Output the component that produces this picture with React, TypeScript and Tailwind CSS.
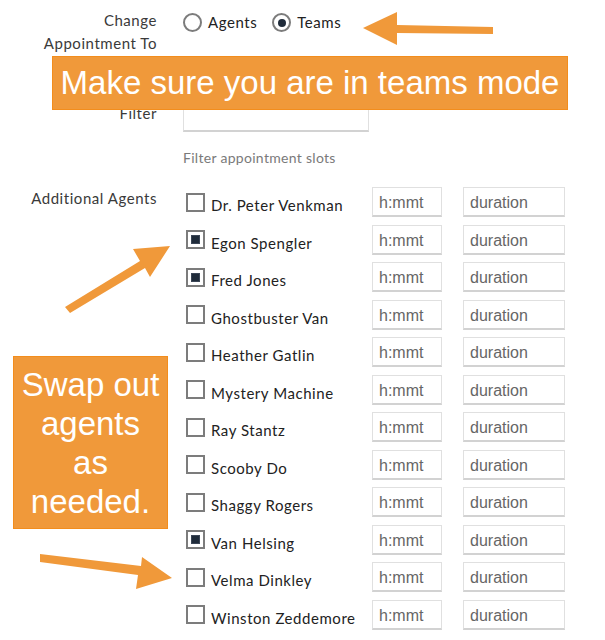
const agents = [
  { name: 'Dr. Peter Venkman', checked: false },
  { name: 'Egon Spengler', checked: true },
  { name: 'Fred Jones', checked: true },
  { name: 'Ghostbuster Van', checked: false },
  { name: 'Heather Gatlin', checked: false },
  { name: 'Mystery Machine', checked: false },
  { name: 'Ray Stantz', checked: false },
  { name: 'Scooby Do', checked: false },
  { name: 'Shaggy Rogers', checked: false },
  { name: 'Van Helsing', checked: true },
  { name: 'Velma Dinkley', checked: false },
  { name: 'Winston Zeddemore', checked: false },
]

function Radio({ checked }: { checked?: boolean }) {
  return (
    <span className="w-[19px] h-[19px] rounded-full border-2 border-[#7c7c7c] bg-white flex items-center justify-center shrink-0">
      {checked && <span className="w-[8px] h-[8px] rounded-full bg-[#1f2b3a]" />}
    </span>
  )
}

function Checkbox({ checked }: { checked?: boolean }) {
  return (
    <span className="w-[19px] h-[19px] border-2 border-[#7c7c7c] bg-white flex items-center justify-center shrink-0">
      {checked && <span className="w-[9px] h-[9px] bg-[#1f2b3a] border border-[#3b4656]" />}
    </span>
  )
}

const inputCls =
  'h-[30px] bg-white border border-[#e0e0e0] border-b-2 border-b-[#d2d2d2] px-[6px] pt-[3px] text-[16px] text-[#333] placeholder:text-[#666] outline-none'

export default function App() {
  return (
    <div
      className="relative w-[605px] h-[640px] overflow-hidden bg-white text-[#333] tracking-[0.55px]"
      style={{ fontFamily: 'Lato, "Open Sans", sans-serif' }}
    >
      {/* Form */}
      <div className="flex flex-col pt-[9px]">
        {/* Change appointment to */}
        <div className="flex gap-[26px]">
          <div className="w-[157px] text-right text-[15px] leading-[23px] text-[#3a3a3a]">
            Change
            <br />
            Appointment To
          </div>
          <div className="flex items-center h-[23px] mt-[2px] text-[15px] text-[#222]">
            <Radio />
            <span className="ml-[6px] mr-[15px]">Agents</span>
            <Radio checked />
            <span className="ml-[6px]">Teams</span>
          </div>
        </div>

        {/* hidden row under the banner */}
        <div className="h-[47px]" />

        {/* Filter */}
        <div className="flex gap-[26px]">
          <div className="w-[157px] text-right text-[15px] leading-[23px] text-[#3a3a3a]">Filter</div>
          <div className="flex flex-col">
            <input className={`${inputCls} w-[186px]`} />
            <div className="mt-[16px] text-[14px] leading-[20px] text-[#7a7a7a] tracking-[0.3px]">
              Filter appointment slots
            </div>
          </div>
        </div>

        {/* Additional agents */}
        <div className="flex gap-[26px] mt-[19px]">
          <div className="w-[157px] text-right text-[15px] leading-[23px] text-[#3a3a3a]">Additional Agents</div>
          <div className="flex flex-col gap-[7.5px]">
            {agents.map((a) => (
              <div key={a.name} className="flex items-center h-[30px]">
                <div className="w-[189px] flex items-center pl-[3px]">
                  <Checkbox checked={a.checked} />
                  <span className="ml-[6px] pt-[7px] text-[15px] text-[#222] whitespace-nowrap">{a.name}</span>
                </div>
                <input
                  placeholder="h:mmt"
                  className={`${inputCls} w-[70px] tracking-normal`}
                  style={{ fontFamily: '"Liberation Sans", Arial, sans-serif' }}
                />
                <input
                  placeholder="duration"
                  className={`${inputCls} w-[102px] ml-[21px] tracking-normal`}
                  style={{ fontFamily: '"Liberation Sans", Arial, sans-serif' }}
                />
              </div>
            ))}
          </div>
        </div>
      </div>

      {/* Annotations */}
      <div
        className="absolute left-[52px] top-[56px] w-[516px] h-[54px] bg-[#f0993a] border border-[#f38d1c] flex items-center justify-center text-white text-[33px] tracking-normal"
        style={{ fontFamily: '"Liberation Sans", Arial, sans-serif' }}
      >
        Make sure you are in teams mode
      </div>

      <div
        className="absolute left-[13px] top-[356px] w-[155px] h-[173px] bg-[#f0993a] border border-[#f38d1c] flex flex-col items-center pt-[8px] text-white text-[33px] leading-[39px] text-center tracking-normal"
        style={{ fontFamily: '"Liberation Sans", Arial, sans-serif' }}
      >
        <span>Swap out</span>
        <span>agents</span>
        <span>as</span>
        <span>needed.</span>
      </div>

      <svg className="absolute inset-0 pointer-events-none" width="605" height="640" viewBox="0 0 605 640">
        <polygon points="493,27 397,25 397,12 363,28 397,45 397,33 493,34" fill="#f0993a" />
        <polygon points="65,307 140,261 133,249 170,246 150,277 145,268 70,313" fill="#f0993a" />
        <polygon points="40,554 141,566 142,557 172,578 136,589 138,575 40,562" fill="#f0993a" />
      </svg>
    </div>
  )
}
